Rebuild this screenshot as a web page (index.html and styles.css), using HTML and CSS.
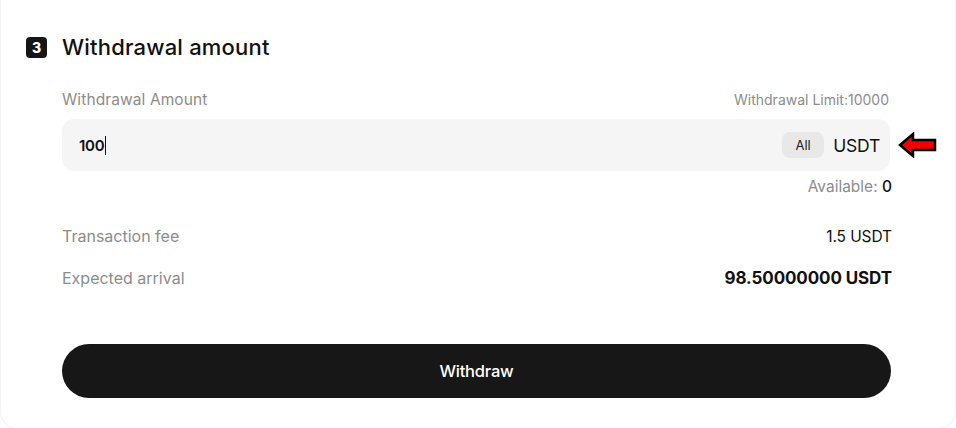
FILE: index.html
```html
<!DOCTYPE html>
<html>
<head>
<meta charset="utf-8">
<link rel="stylesheet" href="styles.css">
</head>
<body>
<div class="card">
  <div class="head">
    <span class="badge">3</span>
    <h2 class="title">Withdrawal amount</h2>
  </div>
  <div class="body">
    <div class="label-row">
      <span class="label">Withdrawal Amount</span>
      <span class="limit">Withdrawal Limit:10000</span>
    </div>
    <div class="input-wrap">
      <div class="input-box">
        <span class="value">100</span><span class="caret"></span>
        <span class="spacer"></span>
        <span class="all">All</span>
        <span class="unit">USDT</span>
      </div>
      <svg class="arrow" width="40" height="26" viewBox="0 0 40 26">
        <path d="M2 13 L15 2 L15 8 L37 8 L37 18 L15 18 L15 24 Z" fill="#f00000" stroke="#000" stroke-width="2.5" stroke-linejoin="miter"/>
      </svg>
    </div>
    <div class="avail">Available: <b>0</b></div>
    <div class="row fee">
      <span class="k">Transaction fee</span>
      <span class="v">1.5 USDT</span>
    </div>
    <div class="row arrival">
      <span class="k">Expected arrival</span>
      <span class="v strong">98.50000000 USDT</span>
    </div>
    <button class="btn">Withdraw</button>
  </div>
</div>
</body>
</html>
```

FILE: styles.css
```css
html, body {
  margin: 0;
  padding: 0;
  background: #ffffff;
}
body {
  font-family: Inter, "Noto Sans", sans-serif;
  width: 956px;
  height: 428px;
  overflow: hidden;
}
.card {
  box-sizing: border-box;
  width: 956px;
  height: 429px;
  border: 1px solid #f3f3f3;
  border-top: none;
  border-radius: 0 0 18px 18px;
  background: #fff;
  padding-top: 36px;
}
.head {
  display: flex;
  align-items: center;
  padding-left: 25px;
  height: 22px;
}
.badge {
  width: 21px;
  height: 21px;
  background: #151515;
  color: #fff;
  border-radius: 4px;
  font-size: 14px;
  font-weight: 800;
  display: flex;
  align-items: center;
  justify-content: center;
  margin-right: 15px;
}
.title {
  margin: 0;
  font-size: 22px;
  font-weight: 500;
  color: #111;
  letter-spacing: 0.2px;
}
.body {
  padding: 0 0 0 61px;
  margin-top: 31px;
}
.label-row {
  display: flex;
  justify-content: space-between;
  align-items: center;
  width: 827px;
  height: 20px;
}
.label {
  font-size: 15.5px;
  color: #8c8c8c;
  letter-spacing: 0.1px;
}
.limit {
  font-size: 14px;
  color: #8c8c8c;
  letter-spacing: 0;
}
.input-wrap {
  display: flex;
  align-items: center;
  margin-top: 10px;
  width: 878px;
}
.input-box {
  box-sizing: border-box;
  width: 828px;
  height: 52px;
  background: #f5f5f5;
  border-radius: 12px;
  display: flex;
  align-items: center;
  padding: 0 10px 0 17px;
}
.value {
  font-size: 15px;
  font-weight: 600;
  color: #111;
  letter-spacing: -0.3px;
}
.caret {
  width: 1px;
  height: 19px;
  background: #111;
  margin-left: 1px;
}
.spacer { flex: 1; }
.all {
  background: #e8e8e8;
  border-radius: 8px;
  font-size: 13px;
  color: #222;
  width: 42px;
  height: 26px;
  display: flex;
  align-items: center;
  justify-content: center;
  margin-right: 9px;
}
.unit {
  font-size: 17.5px;
  color: #111;
  letter-spacing: -0.2px;
}
.arrow {
  margin-left: 8px;
  flex: none;
}
.avail {
  width: 830px;
  text-align: right;
  font-size: 15.5px;
  color: #8c8c8c;
  margin-top: 6px;
  height: 20px;
}
.avail b {
  color: #111;
  font-weight: 500;
}
.row {
  width: 830px;
  display: flex;
  justify-content: space-between;
  align-items: center;
  height: 20px;
}
.fee { margin-top: 29px; }
.arrival { margin-top: 22px; }
.k {
  font-size: 16px;
  color: #8c8c8c;
  letter-spacing: 0;
}
.v {
  font-size: 15.5px;
  color: #111;
  letter-spacing: -0.1px;
}
.v.strong {
  font-size: 17px;
  font-weight: 700;
  letter-spacing: -0.1px;
}
.btn {
  display: block;
  margin-top: 56px;
  width: 829px;
  height: 54px;
  border: none;
  border-radius: 27px;
  background: #171717;
  color: #fff;
  font-family: Inter, "Noto Sans", sans-serif;
  font-size: 16.5px;
  font-weight: 500;
  letter-spacing: -0.2px;
}
```
